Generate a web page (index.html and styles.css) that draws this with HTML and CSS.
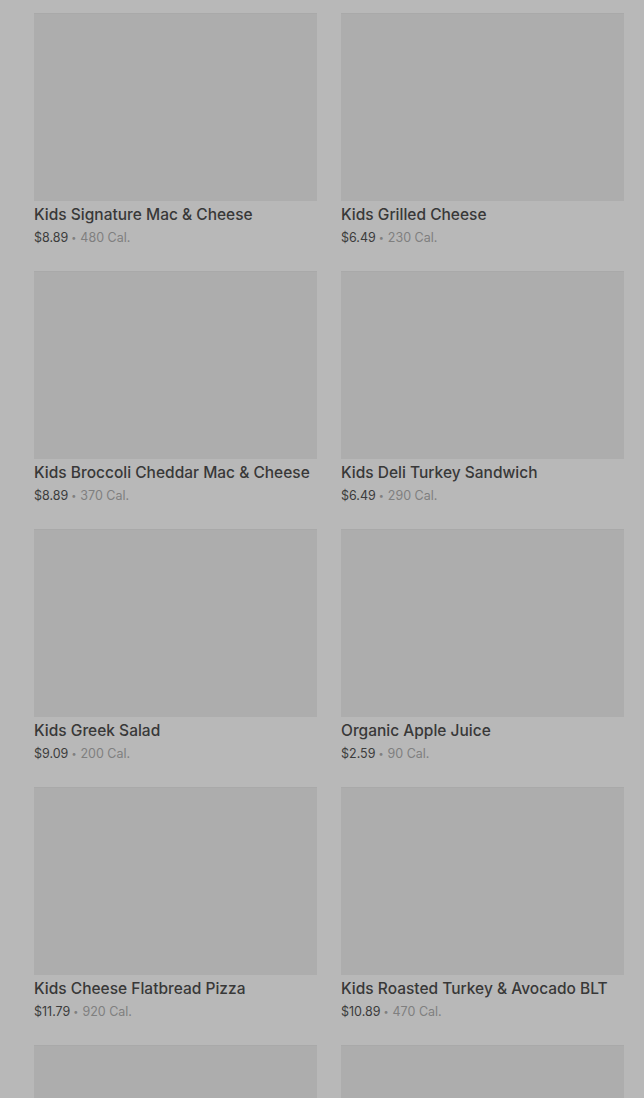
FILE: index.html
```html
<!DOCTYPE html>
<html lang="en">
<head>
  <meta charset="UTF-8" />
  <title>Kids Menu</title>
  <link rel="stylesheet" href="styles.css">
</head>
<body>
  <div class="menu-grid">
    <div class="item">
      <div class="thumb"></div>
      <div class="name">Kids Signature Mac &amp; Cheese</div>
      <div class="meta"><span class="price">$8.89</span><span class="dot">•</span>480 Cal.</div>
    </div>
    <div class="item">
      <div class="thumb"></div>
      <div class="name">Kids Grilled Cheese</div>
      <div class="meta"><span class="price">$6.49</span><span class="dot">•</span>230 Cal.</div>
    </div>
    <div class="item">
      <div class="thumb"></div>
      <div class="name">Kids Broccoli Cheddar Mac &amp; Cheese</div>
      <div class="meta"><span class="price">$8.89</span><span class="dot">•</span>370 Cal.</div>
    </div>
    <div class="item">
      <div class="thumb"></div>
      <div class="name">Kids Deli Turkey Sandwich</div>
      <div class="meta"><span class="price">$6.49</span><span class="dot">•</span>290 Cal.</div>
    </div>
    <div class="item">
      <div class="thumb"></div>
      <div class="name">Kids Greek Salad</div>
      <div class="meta"><span class="price">$9.09</span><span class="dot">•</span>200 Cal.</div>
    </div>
    <div class="item">
      <div class="thumb"></div>
      <div class="name">Organic Apple Juice</div>
      <div class="meta"><span class="price">$2.59</span><span class="dot">•</span>90 Cal.</div>
    </div>
    <div class="item">
      <div class="thumb"></div>
      <div class="name">Kids Cheese Flatbread Pizza</div>
      <div class="meta"><span class="price">$11.79</span><span class="dot">•</span>920 Cal.</div>
    </div>
    <div class="item">
      <div class="thumb"></div>
      <div class="name">Kids Roasted Turkey &amp; Avocado BLT</div>
      <div class="meta"><span class="price">$10.89</span><span class="dot">•</span>470 Cal.</div>
    </div>
    <div class="item">
      <div class="thumb"></div>
    </div>
    <div class="item">
      <div class="thumb"></div>
    </div>
  </div>
</body>
</html>
```

FILE: styles.css
```css
body {
  font-family: 'Inter', 'Liberation Sans', sans-serif;
  margin: 0;
  padding: 0;
  background-color: #b8b8b8;
  height: 1098px;
  overflow: hidden;
}

.menu-grid {
  display: grid;
  grid-template-columns: 283px 283px;
  column-gap: 24px;
  row-gap: 23px;
  padding: 13px 0 0 34px;
}

.item {
  display: flex;
  flex-direction: column;
}

.thumb {
  height: 187px;
  background-color: #adadad;
  border-top: 1px solid #a9a9a9;
}

.name {
  margin-top: 3px;
  font-size: 15.5px;
  font-weight: 500;
  line-height: 22px;
  color: #383838;
  white-space: nowrap;
}

.meta {
  margin-top: 2px;
  font-size: 12.5px;
  line-height: 20px;
  color: #7f7f7f;
}

.price {
  color: #3c3c3c;
}

.dot {
  font-size: 9px;
  margin: 0 4px 0 3px;
  vertical-align: 1px;
}
```
